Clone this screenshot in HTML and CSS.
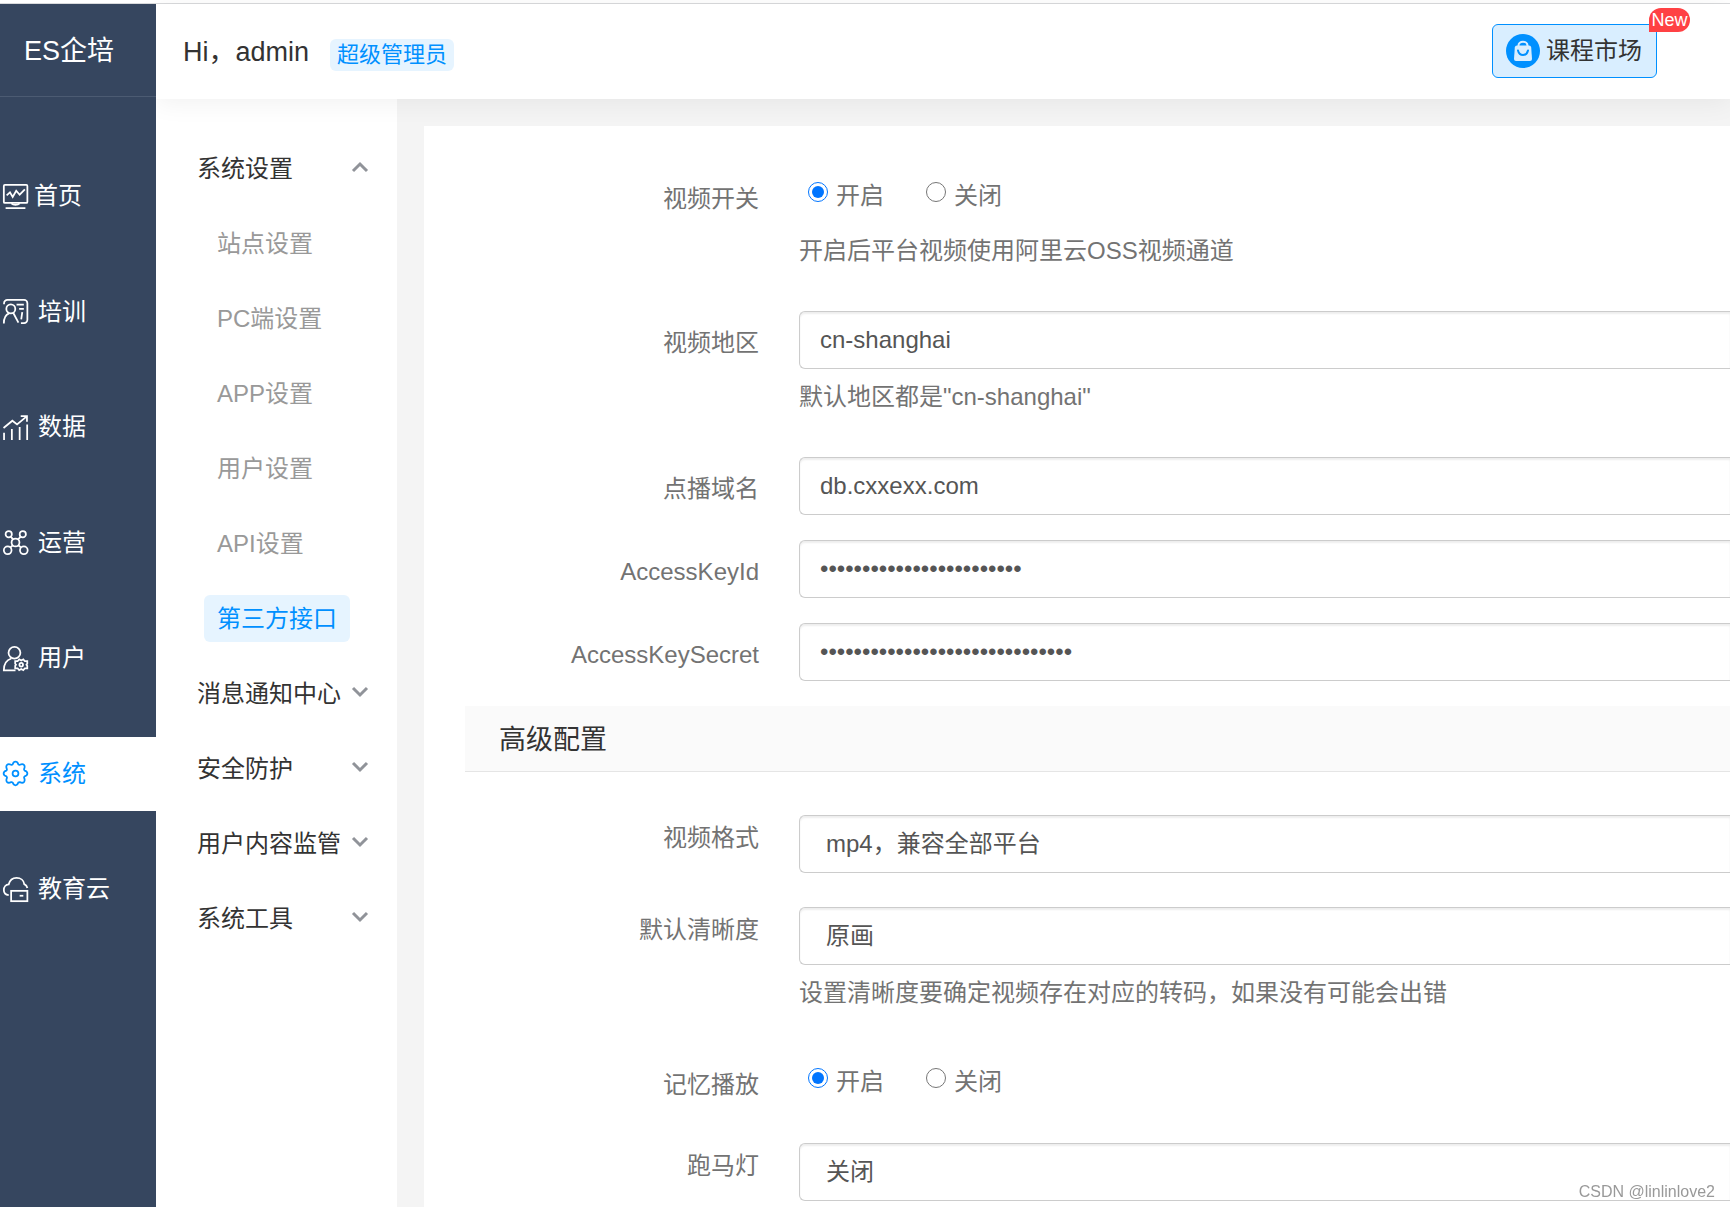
FILE: index.html
```html
<!DOCTYPE html>
<html lang="zh-CN">
<head>
<meta charset="utf-8">
<meta name="viewport" content="width=device-width, initial-scale=1">
<title>ES企培</title>
<link rel="stylesheet" href="styles.css">
</head>
<body>
<div class="app">
  <aside class="sidebar">
    <div class="logo">ES企培</div>
    <nav class="nav">
      <a class="nav-item nav-item--tight" href="#home">
        <svg class="icon" viewBox="0 0 24 24"><rect x="0.8" y="0.8" width="22.6" height="17.4" rx="1"/><path d="M3.5 11l3.2-3 2.6 4.500 3.400-6 3.300 3.800 5-5.200M8 18.500c2 2 6 2 8 0M2.500 23.200h19"/></svg>
        <span>首页</span>
      </a>
      <a class="nav-item" href="#training">
        <svg class="icon" viewBox="0 0 24 24"><path d="M1 5V4a3.200 3.200 0 0 1 3.200-3.200h16A3.200 3.200 0 0 1 23.400 4v16a3.200 3.200 0 0 1-3.200 3.200h-3M13 5.500h7M15.500 9.500h4.500M18.500 12.500l-1 7"/><circle cx="7.500" cy="9.500" r="4.300"/><path d="M.8 23.500c0-5 2-8.500 5-9.700M9.800 13.200l5 9.500"/></svg>
        <span>培训</span>
      </a>
      <a class="nav-item" href="#data">
        <svg class="icon" viewBox="0 0 24 24"><path d="M1 17v7M8.500 13.500V24M16 11.500V24M23.200 9v15M.5 12.500l8.500-7 4.500 3.500 9-7.500M17 1h6v5.500"/></svg>
        <span>数据</span>
      </a>
      <a class="nav-item" href="#operation">
        <svg class="icon" viewBox="0 0 24 24"><circle cx="12" cy="12" r="3.800"/><circle cx="5.500" cy="4" r="3"/><circle cx="19" cy="4" r="3"/><circle cx="4.500" cy="19.500" r="3.700"/><circle cx="20" cy="19.500" r="3.700"/><path d="M7.500 6.300l2 2.700M17 6.300L14.500 9M9.300 14.700L7 16.800M14.700 14.700l2.600 2.100"/></svg>
        <span>运营</span>
      </a>
      <a class="nav-item" href="#users">
        <svg class="icon" viewBox="0 0 24 24"><circle cx="11" cy="6.500" r="5.700"/><path d="M8 12C3 13.500.8 18 .8 23.300H12"/><path d="M15.500 12.800l2 1.200 2-1.200 1.500 1.800h2.300v2.400l-.8 1 .8 1v2.400H21l-1.500 1.800-2-1.200-2 1.200-1.500-1.800h-2.300V19l.8-1-.8-1v-2.400H14z"/><circle cx="17.500" cy="18" r="1.700"/></svg>
        <span>用户</span>
      </a>
      <a class="nav-item nav-item--active" href="#system" aria-current="page">
        <svg class="icon" viewBox="0 0 24 24"><path d="M9.300 3.200C10 1 10.800.6 12 .6s2 .4 2.700 2.600c.5.500 1 .600 1.500.4 2.200-1 3.100-.7 3.900.1s1.100 1.800.1 4c-.1.700 0 1.100.6 1.600 2.200.7 2.600 1.500 2.600 2.700s-.4 2-2.600 2.700c-.600.500-.700.900-.500 1.600 1 2.200.6 3-.2 3.900-.8.800-1.700 1.100-3.900.1-.5-.1-1 0-1.500.4-.700 2.200-1.500 2.600-2.700 2.600s-2-.4-2.700-2.600c-.5-.5-1-.600-1.500-.4-2.200 1-3.100.7-3.900-.1s-1.100-1.700-.1-3.900c.1-.700 0-1.100-.5-1.600C1 14 .6 13.200.6 12s.4-2 2.600-2.700c.600-.500.700-.900.5-1.600-1-2.200-.6-3.200.2-4s1.700-1.100 3.900-.1c.5.200 1 .1 1.500-.4z"/><circle cx="12" cy="12" r="2.800"/></svg>
        <span>系统</span>
      </a>
      <a class="nav-item" href="#cloud">
        <svg class="icon" viewBox="0 0 24 24"><path d="M5.500 17.500C2 17 .8 14.500.8 12.500c0-3 2-5.300 4.700-5.500C6.500 3 9.500.8 13 .8c4 0 7 2.600 7.400 6 1.800.8 2.600 2 3 3.700"/><rect x="7.800" y="13.300" width="15.600" height="9.900"/><path d="M16 18h3.500"/></svg>
        <span>教育云</span>
      </a>
    </nav>
  </aside>

  <div class="page">
    <header class="header">
      <div class="greeting">
        <span class="greeting-name">Hi，admin</span>
        <span class="role">超级管理员</span>
      </div>
      <button class="market" type="button">
        <svg class="market-icon" viewBox="0 0 34 34"><circle cx="17" cy="17" r="17" fill="#0090ff"/><path d="M12.500 12.500v-1a4.500 3.800 0 0 1 9 0v1" fill="none" stroke="#d9eeff" stroke-width="2"/><path d="M11 11.500h12q2 0 2.200 2L26 25q0 2-2 2H10q-2 0-2-2l.8-11.500q.2-2 2.200-2z" fill="#d9eeff"/><path d="M12 16.500c1.500 6 8.500 6 10 0" fill="none" stroke="#0090ff" stroke-width="2" stroke-linecap="round"/></svg>
        <span>课程市场</span>
        <span class="market-badge">New</span>
      </button>
    </header>

    <div class="body">
      <nav class="menu">
        <a class="menu-group" href="#settings">系统设置<svg class="chevron" viewBox="0 0 18 12"><path d="M2 10l7-7 7 7"/></svg></a>
        <a class="menu-link" href="#site">站点设置</a>
        <a class="menu-link" href="#pc">PC端设置</a>
        <a class="menu-link" href="#app">APP设置</a>
        <a class="menu-link" href="#user">用户设置</a>
        <a class="menu-link" href="#api">API设置</a>
        <a class="menu-link menu-link--active" href="#third" aria-current="page"><span class="menu-pill">第三方接口</span></a>
        <a class="menu-group" href="#notice">消息通知中心<svg class="chevron" viewBox="0 0 18 12"><path d="M2 2l7 7 7-7"/></svg></a>
        <a class="menu-group" href="#security">安全防护<svg class="chevron" viewBox="0 0 18 12"><path d="M2 2l7 7 7-7"/></svg></a>
        <a class="menu-group" href="#content">用户内容监管<svg class="chevron" viewBox="0 0 18 12"><path d="M2 2l7 7 7-7"/></svg></a>
        <a class="menu-group" href="#tools">系统工具<svg class="chevron" viewBox="0 0 18 12"><path d="M2 2l7 7 7-7"/></svg></a>
      </nav>

      <main class="main">
        <form class="card">
          <div class="row" role="radiogroup" aria-labelledby="video-label">
            <span class="label" id="video-label">视频开关</span>
            <div>
              <div class="radios">
                <label class="radio"><input type="radio" name="video" checked>开启</label>
                <label class="radio"><input type="radio" name="video">关闭</label>
              </div>
              <p class="hint">开启后平台视频使用阿里云OSS视频通道</p>
            </div>
          </div>
          <div class="row">
            <label class="label" for="region">视频地区</label>
            <div>
              <input class="control" id="region" type="text" value="cn-shanghai">
              <p class="hint">默认地区都是"cn-shanghai"</p>
            </div>
          </div>
          <div class="row">
            <label class="label" for="domain">点播域名</label>
            <input class="control" id="domain" type="text" value="db.cxxexx.com">
          </div>
          <div class="row">
            <label class="label" for="key-id">AccessKeyId</label>
            <input class="control" id="key-id" type="password" autocomplete="off" value="000000000000000000000000">
          </div>
          <div class="row">
            <label class="label" for="key-secret">AccessKeySecret</label>
            <input class="control" id="key-secret" type="password" autocomplete="off" value="000000000000000000000000000000">
          </div>

          <h2 class="section">高级配置</h2>

          <div class="row row--roomy">
            <label class="label label--top" for="format">视频格式</label>
            <select class="control control--select" id="format"><option>mp4，兼容全部平台</option></select>
          </div>
          <div class="row">
            <label class="label label--top" for="quality">默认清晰度</label>
            <div>
              <select class="control control--select" id="quality"><option>原画</option></select>
              <p class="hint">设置清晰度要确定视频存在对应的转码，如果没有可能会出错</p>
            </div>
          </div>
          <div class="row row--roomy" role="radiogroup" aria-labelledby="memory-label">
            <span class="label" id="memory-label">记忆播放</span>
            <div class="radios">
              <label class="radio"><input type="radio" name="memory" checked>开启</label>
              <label class="radio"><input type="radio" name="memory">关闭</label>
            </div>
          </div>
          <div class="row row--last">
            <label class="label label--top" for="marquee">跑马灯</label>
            <select class="control control--select" id="marquee"><option>关闭</option></select>
          </div>
        </form>
      </main>
    </div>
  </div>
</div>
<div class="watermark">CSDN @linlinlove2</div>
</body>
</html>
```
FILE: styles.css
```css
* {
  box-sizing: border-box;
}

body {
  margin: 0;
  padding-top: 3px;
  background: #fff;
  color: #333;
  font: 24px/36px "Liberation Sans", "Noto Sans CJK SC", sans-serif;
}

a {
  color: inherit;
  text-decoration: none;
}

.app {
  display: flex;
  min-height: calc(100vh - 3px);
  border-top: 1px solid #d9dadc;
}

/* Primary sidebar */
.sidebar {
  position: relative;
  z-index: 2;
  flex: none;
  width: 156px;
  background: #36465f;
  color: #fff;
}

.logo {
  height: 93px;
  padding-left: 24px;
  border-bottom: 1px solid #4c5b72;
  font-size: 27px;
  line-height: 94px;
}

.nav {
  display: flex;
  flex-direction: column;
  justify-content: space-between;
  height: 767px;
  margin-top: 62px;
}

.nav-item {
  display: flex;
  align-items: center;
  gap: 10px;
  height: 74px;
  padding-left: 3px;
}

.nav-item--tight {
  gap: 6px;
}

.nav-item--active {
  background: #fff;
  color: #0090ff;
}

.icon {
  flex: none;
  width: 25px;
  height: 25px;
  overflow: visible;
  fill: none;
  stroke: currentColor;
  stroke-width: 1.7;
}

/* Top bar */
.page {
  flex: 1;
  display: flex;
  flex-direction: column;
  min-width: 0;
}

.header {
  position: relative;
  z-index: 1;
  display: flex;
  align-items: center;
  justify-content: space-between;
  height: 95px;
  padding: 0 73px 0 27px;
  background: #fff;
  box-shadow: 0 4px 24px rgba(0, 0, 0, 0.06);
}

.greeting {
  display: flex;
  align-items: center;
  gap: 21px;
}

.greeting-name {
  font-size: 27px;
}

.role {
  margin-top: 6px;
  padding: 0 7px;
  border-radius: 6px;
  background: #e6f4ff;
  color: #0090ff;
  font-size: 22px;
  line-height: 32px;
}

.market {
  position: relative;
  display: flex;
  align-items: center;
  gap: 6px;
  height: 54px;
  margin-bottom: 2px;
  padding: 0 14px 0 13px;
  border: 1px solid #0090ff;
  border-radius: 6px;
  background: #d9eeff;
  color: #333;
  font: inherit;
}

.market-icon {
  width: 34px;
  height: 34px;
}

.market-badge {
  position: absolute;
  top: -17px;
  right: -34px;
  width: 41px;
  border-radius: 12px 12px 12px 0;
  background: #ff4144;
  color: #fff;
  font-size: 18px;
  line-height: 24px;
  text-align: center;
}

/* Secondary menu */
.body {
  flex: 1;
  display: flex;
}

.menu {
  flex: none;
  width: 241px;
  padding: 32px 28px 0 41px;
}

.menu-group,
.menu-link {
  display: flex;
  align-items: center;
  height: 75px;
}

.menu-group {
  justify-content: space-between;
}

.menu-link {
  padding-left: 20px;
  color: #999;
}

.menu-link--active {
  padding-left: 7px;
  color: #0090ff;
}

.menu-pill {
  padding: 0 13px;
  border-radius: 6px;
  background: #e6f4ff;
  line-height: 47px;
  white-space: nowrap;
}

.chevron {
  flex: none;
  width: 18px;
  height: 12px;
  margin-bottom: 4px;
  fill: none;
  stroke: #909399;
  stroke-width: 3;
}

/* Settings form */
.main {
  flex: 1;
  min-width: 0;
  padding: 27px 0 0 27px;
  background: #f4f4f4;
}

.card {
  position: relative;
  z-index: 1;
  min-height: 100%;
  padding: 41px 0 0 41px;
  background: #fff;
  color: #737373;
}

.row {
  display: grid;
  grid-template-columns: 294px minmax(0, 1fr);
  column-gap: 40px;
  align-items: start;
  margin-bottom: 25px;
}

.row--roomy {
  margin-bottom: 34px;
}

.row--last {
  margin-bottom: 0;
}

.label {
  padding-top: 14px;
  text-align: right;
}

.label--top {
  padding-top: 5px;
}

.control {
  display: block;
  width: 100%;
  height: 58px;
  padding: 0 20px;
  border: 1px solid #ccc;
  border-right: 0;
  border-radius: 6px 0 0 6px;
  background: #fff;
  box-shadow: inset 0 2px 2px rgba(0, 0, 0, 0.07);
  color: #555;
  font: inherit;
  outline: 0;
}

.control--select {
  padding: 0 26px;
  appearance: none;
}

.hint {
  margin: 10px 0 17px;
}

.radios {
  display: flex;
  gap: 42px;
  height: 56px;
  padding: 2px 0 0 9px;
}

.radio {
  display: flex;
  align-items: center;
  gap: 8px;
}

.radio input {
  width: 20px;
  height: 20px;
  margin: 0 0 8px;
  accent-color: #0075ff;
}

.section {
  height: 66px;
  margin: 0 0 43px;
  padding-left: 34px;
  border-bottom: 1px solid #e5e5e5;
  background: #fafafa;
  color: #333;
  font-size: 27px;
  font-weight: 400;
  line-height: 68px;
}

.watermark {
  position: fixed;
  right: 15px;
  bottom: 3px;
  z-index: 3;
  color: #999;
  font-size: 16px;
  line-height: 24px;
  text-shadow: -1px -1px 0 #fff;
}
```
